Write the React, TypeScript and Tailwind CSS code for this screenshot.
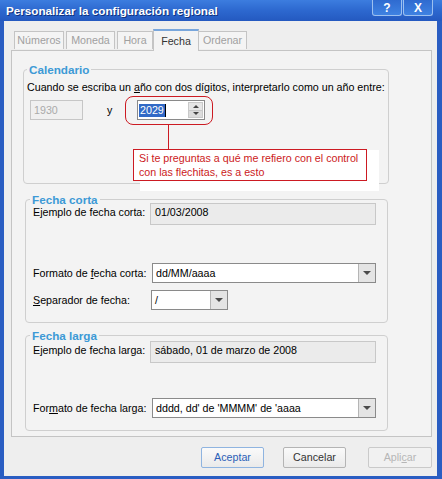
import React from "react";

function DropBtn() {
  return (
    <div className="w-[17px] h-full flex items-center justify-center bg-[#e4e4e4] border-l border-[#b5b5b5]">
      <span className="block w-0 h-0 border-x-[4px] border-x-transparent border-t-[4px] border-t-[#4a4a4a]" />
    </div>
  );
}

function Combo({ cls, value }: { cls: string; value: string }) {
  return (
    <div className={"flex h-[20px] border border-[#8a8a8a] bg-white " + cls}>
      <div className="flex-1 pl-[3px] leading-[18px] whitespace-nowrap">{value}</div>
      <DropBtn />
    </div>
  );
}

function Sample({ value }: { value: string }) {
  return (
    <div className="w-[226px] h-[22px] border border-[#c8c8c8] bg-[#ebebeb] pl-[4px] pt-[2px] leading-[13px]">
      {value}
    </div>
  );
}

export default function App() {
  return (
    <div className="w-[442px] h-[479px] bg-[#2a5dc2] flex flex-col font-['Liberation_Sans',Arial,sans-serif] text-[10.7px] text-black overflow-hidden">
      {/* title bar */}
      <div className="h-[21px] flex items-start justify-between bg-gradient-to-b from-[#3c7ddf] via-[#2d68cf] to-[#2459c0] pl-[6px] pr-[9px]">
        <span className="mt-[4px] text-white font-bold text-[11.7px] leading-[14px] [text-shadow:1px_1px_0_#10337f]">
          Personalizar la configuración regional
        </span>
        <div className="flex gap-[1px]">
          <div className="w-[30px] h-[16px] rounded-b-[3px] border border-t-0 border-[#9cc0f0] bg-gradient-to-b from-[#2f6bd0] to-[#3f82e2] flex items-center justify-center text-white font-bold text-[12px] leading-none">
            ?
          </div>
          <div className="w-[30px] h-[16px] rounded-b-[3px] border border-t-0 border-[#9cc0f0] bg-gradient-to-b from-[#2f6bd0] to-[#3f82e2] flex items-center justify-center text-white font-bold text-[12px] leading-none">
            X
          </div>
        </div>
      </div>

      {/* body */}
      <div className="flex-1 ml-[4px] mr-[5px] mb-[3px] bg-[#eeeeee] pl-[7px] pr-[5px] pt-[8px] flex flex-col">
        {/* tabs */}
        <div className="h-[21px] flex items-end pl-[3px] relative z-10">
          <div className="w-[50px] h-[18px] border border-b-0 border-[#c4c4c4] bg-[#f4f4f4] text-[#a0a0a0] flex items-center justify-center mb-[1px]">
            Números
          </div>
          <div className="w-[49px] h-[18px] ml-[2px] border border-b-0 border-[#c4c4c4] bg-[#f4f4f4] text-[#a0a0a0] flex items-center justify-center mb-[1px]">
            Moneda
          </div>
          <div className="w-[36px] h-[18px] ml-[2px] border border-b-0 border-[#c4c4c4] bg-[#f4f4f4] text-[#a0a0a0] flex items-center justify-center mb-[1px]">
            Hora
          </div>
          <div className="w-[46px] h-[22px] border border-b-0 border-[#c4c4c4] border-t-2 border-t-[#78a6dc] bg-[#f3f3f3] text-[#333] flex items-center justify-center mb-[-1px]">
            Fecha
          </div>
          <div className="w-[48px] h-[18px] border border-b-0 border-l-0 border-[#c4c4c4] bg-[#f4f4f4] text-[#a0a0a0] flex items-center justify-center mb-[1px]">
            Ordenar
          </div>
        </div>

        {/* panel */}
        <div className="h-[387px] border border-[#c4c4c4] bg-[#f3f3f3] pt-[12px] pl-[11px]">
          {/* Calendario */}
          <fieldset className="w-[362px] border border-[#cfcfcf] rounded-[4px] px-[3px] pb-[63px]">
            <legend className="px-[2px] text-[11.7px] leading-[13px] font-bold text-[#3d9ad6]">Calendario</legend>
            <div className="mt-[5px] leading-[13px] whitespace-nowrap">
              Cuando se escriba un <span className="underline">a</span>ño con dos dígitos, interpretarlo como un año entre:
            </div>
            <div className="mt-[6px] flex items-center h-[20px]">
              <div className="ml-[3px] w-[53px] h-[20px] border border-[#c6c6c6] bg-[#f0f0f0] text-[#aaaaaa] pl-[3px] leading-[18px]">
                1930
              </div>
              <span className="ml-[24px] w-[6px]">y</span>
              <div className="relative ml-[24px] w-[68px] h-[20px] border border-[#8a8a8a] bg-white flex">
                <div className="flex-1 flex items-center pl-[1px]">
                  <span className="bg-[#3169c6] text-white leading-[13px] px-[1px]">2029</span>
                  <span className="w-[1px] h-[13px] bg-black" />
                </div>
                <div className="w-[15px] my-[1px] mr-[1px] flex flex-col">
                  <div className="flex-1 bg-[#e6e6e6] border border-[#c9c9c9] flex items-center justify-center">
                    <span className="block w-0 h-0 border-x-[3px] border-x-transparent border-b-[3px] border-b-[#444]" />
                  </div>
                  <div className="flex-1 bg-[#dcdcdc] border border-t-0 border-[#c9c9c9] flex items-center justify-center">
                    <span className="block w-0 h-0 border-x-[3px] border-x-transparent border-t-[3px] border-t-[#444]" />
                  </div>
                </div>
                {/* annotation overlay */}
                <div className="absolute left-[-13px] top-[-5px] w-[88px] h-[29px] rounded-[8px] border border-[#cc1a22]" />
                <div className="absolute left-[30px] top-[23px] w-[1px] h-[26px] bg-[#cc1a22]" />
                <div className="absolute left-[2px] top-[49px] w-[239px] h-[41px] bg-white" />
                <div className="absolute left-[-5px] top-[48px] w-[234px] h-[32px] border border-[#cc1a22] bg-white pl-[5px] pt-[1px] text-[#cc1a22] leading-[14px] whitespace-nowrap">
                  Si te preguntas a qué me refiero con el control
                  <br />
                  con las flechitas, es a esto
                </div>
              </div>
            </div>
          </fieldset>

          {/* Fecha corta */}
          <fieldset className="mt-[9px] ml-[2px] w-[363px] border border-[#cfcfcf] rounded-[4px] px-[3px] pb-[12px]">
            <legend className="px-[2px] ml-[1px] text-[11.7px] leading-[13px] font-bold text-[#3d9ad6]">Fecha corta</legend>
            <div className="pl-[4px] mt-[-3px]">
              <div className="flex items-start">
                <div className="w-[117px] pt-[3px] leading-[13px]">Ejemplo de fecha corta:</div>
                <Sample value="01/03/2008" />
              </div>
              <div className="mt-[38px] flex items-center">
                <div className="w-[119px]">
                  Formato de <span className="underline">f</span>echa corta:
                </div>
                <Combo cls="w-[224px]" value="dd/MM/aaaa" />
              </div>
              <div className="mt-[7px] flex items-center">
                <div className="w-[118px]">
                  <span className="underline">S</span>eparador de fecha:
                </div>
                <Combo cls="w-[77px]" value="/" />
              </div>
            </div>
          </fieldset>

          {/* Fecha larga */}
          <fieldset className="mt-[6px] ml-[2px] w-[363px] border border-[#cfcfcf] rounded-[4px] px-[3px] pb-[12px]">
            <legend className="px-[2px] ml-[1px] text-[11.7px] leading-[13px] font-bold text-[#3d9ad6]">Fecha larga</legend>
            <div className="pl-[4px] mt-[-1px]">
              <div className="flex items-start">
                <div className="w-[117px] pt-[3px] leading-[13px]">Ejemplo de fecha larga:</div>
                <Sample value="sábado, 01 de marzo de 2008" />
              </div>
              <div className="mt-[35px] flex items-center">
                <div className="w-[119px]">
                  For<span className="underline">m</span>ato de fecha larga:
                </div>
                <Combo cls="w-[224px]" value="dddd, dd' de 'MMMM' de 'aaaa" />
              </div>
            </div>
          </fieldset>
        </div>

        {/* buttons */}
        <div className="mt-[10px] flex justify-end">
          <div className="w-[63px] h-[21px] border border-[#8fb4e0] rounded-[2px] bg-gradient-to-b from-[#fafafa] to-[#eaeaea] text-[#2b5fb8] flex items-center justify-center">
            Aceptar
          </div>
          <div className="ml-[19px] w-[63px] h-[21px] border border-[#b4b4b4] rounded-[2px] bg-gradient-to-b from-[#fafafa] to-[#eaeaea] text-[#333] flex items-center justify-center">
            Cancelar
          </div>
          <div className="ml-[22px] w-[64px] h-[21px] border border-[#cacaca] rounded-[2px] bg-[#f1f1f1] text-[#b6b6b6] flex items-center justify-center">
            <span>
              Apli<span className="underline">c</span>ar
            </span>
          </div>
        </div>
      </div>
    </div>
  );
}
